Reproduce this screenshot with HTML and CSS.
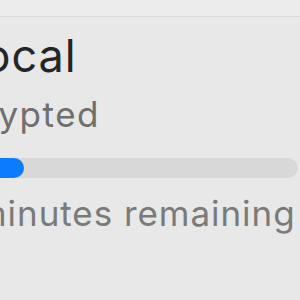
FILE: index.html
```html
<!DOCTYPE html>
<html>
<head>
<meta charset="utf-8">
<link rel="stylesheet" href="styles.css">
</head>
<body>
<div class="window">
  <div class="toolbar"></div>
  <div class="content">
    <div class="title">Local</div>
    <div class="status">Encrypted</div>
    <div class="progress"><div class="fill" style="width: 52px"></div></div>
    <div class="remaining">minutes remaining</div>
  </div>
</div>
</body>
</html>
```
FILE: styles.css
```css
html, body {
  margin: 0;
  padding: 0;
  width: 300px;
  height: 300px;
  overflow: hidden;
  background: #e8e8e8;
}
.window {
  display: flex;
  flex-direction: column;
  height: 300px;
  font-family: Inter, "Liberation Sans", Arial, sans-serif;
}
.toolbar {
  height: 16px;
  background: #ececec;
  border-bottom: 1px solid #d8d8d8;
  flex: none;
}
.content {
  display: flex;
  flex-direction: column;
  white-space: nowrap;
}
.title {
  font-size: 45px;
  line-height: 54px;
  letter-spacing: 1px;
  color: #252525;
  margin-left: -43px;
  margin-top: 12px;
}
.status {
  font-size: 35px;
  line-height: 40px;
  letter-spacing: 1.5px;
  color: #6f6f6f;
  margin-left: -83px;
  margin-top: 11px;
}
.progress {
  margin-top: 24px;
  margin-left: -28px;
  width: 326px;
  height: 20px;
  border-radius: 10px;
  background: #d8d8d8;
  overflow: hidden;
}
.fill {
  height: 100%;
  background: #0b7bff;
  border-radius: 10px;
}
.remaining {
  font-size: 35px;
  line-height: 40px;
  letter-spacing: 0.95px;
  color: #7a7a7a;
  margin-left: -24px;
  margin-top: 15px;
}
```
